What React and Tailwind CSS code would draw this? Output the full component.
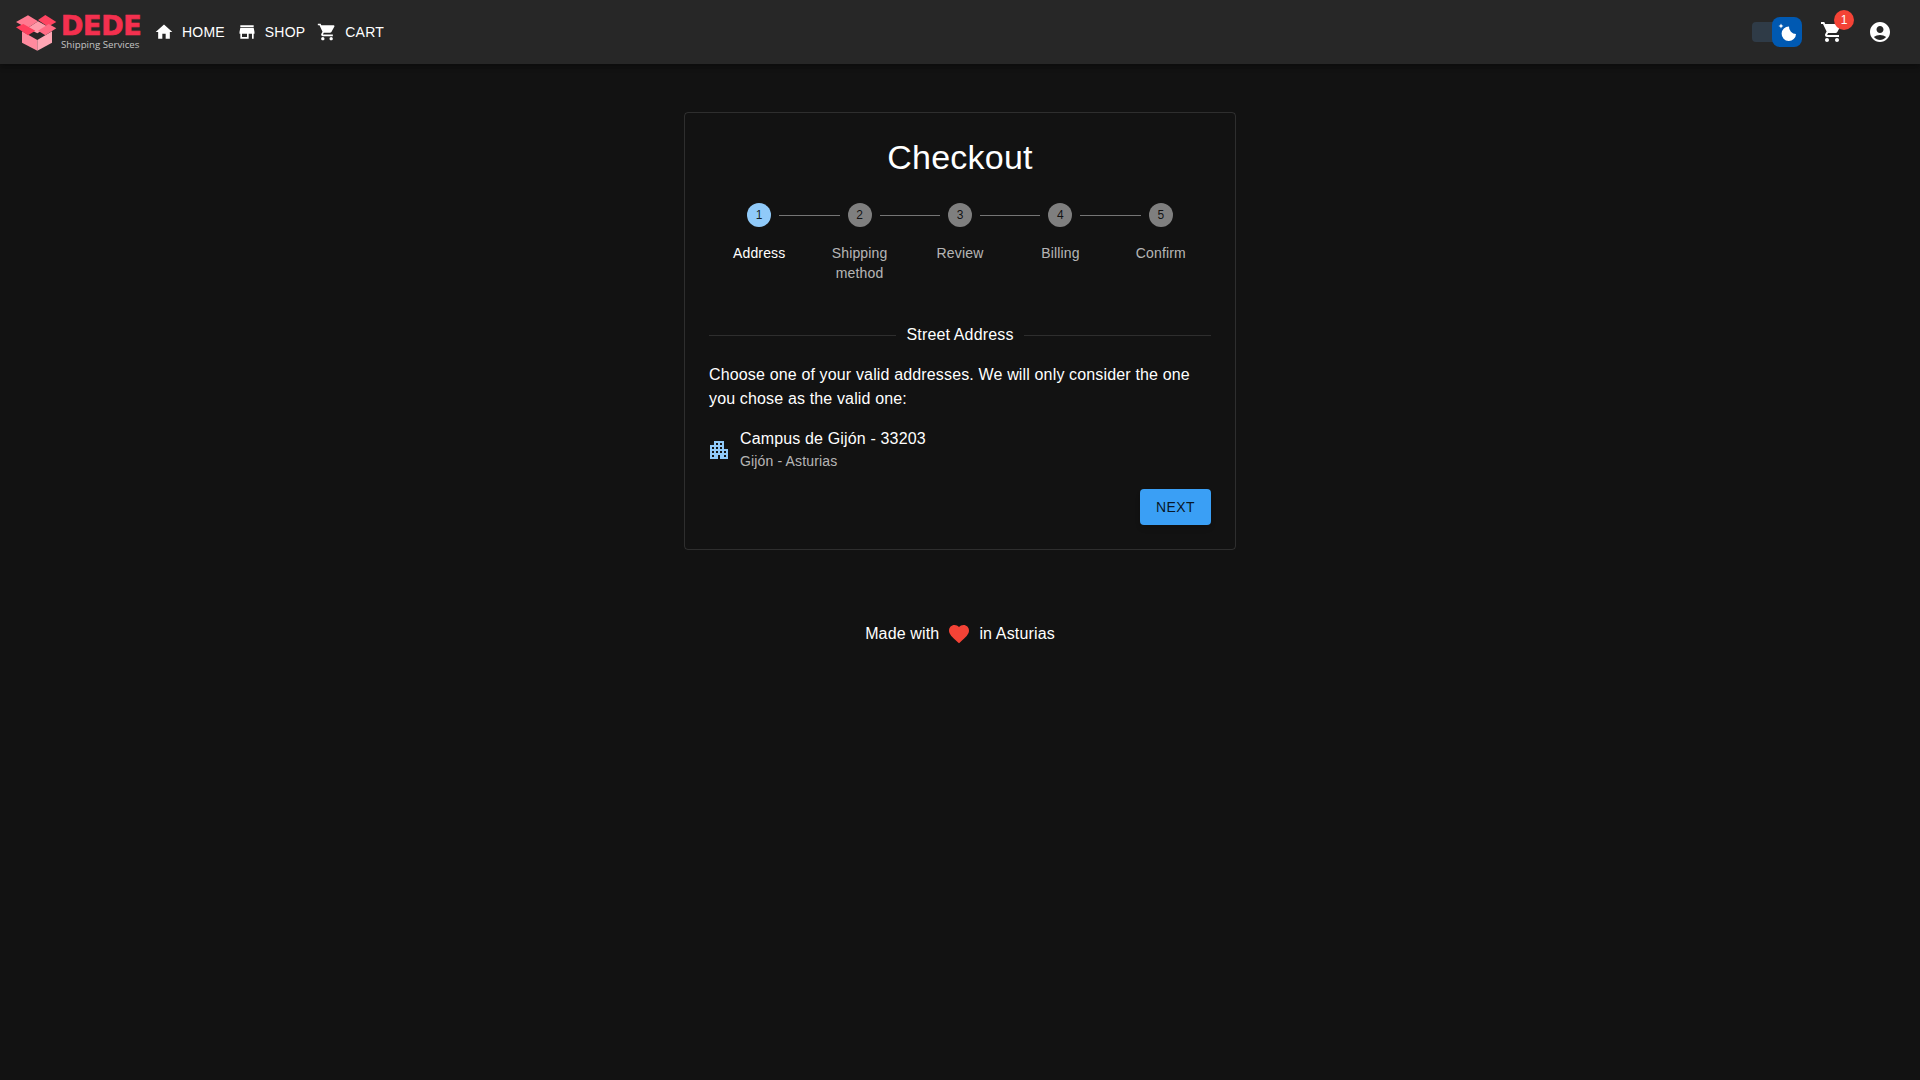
import React from "react";

const ICONS = {
  home: "M10 20v-6h4v6h5v-8h3L12 3 2 12h3v8z",
  store: "M20 4H4v2h16V4zm1 10v-2l-1-5H4l-1 5v2h1v6h10v-6h4v6h2v-6h1zm-9 4H6v-4h6v4z",
  cart: "M7 18c-1.1 0-1.99.9-1.99 2S5.9 22 7 22s2-.9 2-2-.9-2-2-2zM1 2v2h2l3.6 7.59-1.35 2.45c-.16.28-.25.61-.25.96 0 1.1.9 2 2 2h12v-2H7.42c-.14 0-.25-.11-.25-.25l.03-.12.9-1.63h7.45c.75 0 1.41-.41 1.75-1.03l3.58-6.49c.08-.14.12-.31.12-.48 0-.55-.45-1-1-1H5.21l-.94-2H1zm16 16c-1.1 0-1.99.9-1.99 2s.89 2 1.99 2 2-.9 2-2-.9-2-2-2z",
  account: "M12 2C6.48 2 2 6.48 2 12s4.48 10 10 10 10-4.48 10-10S17.52 2 12 2zm0 4c1.93 0 3.5 1.57 3.5 3.5S13.93 13 12 13s-3.5-1.57-3.5-3.5S10.07 6 12 6zm0 14c-2.03 0-4.43-.82-6.14-2.88C7.55 15.8 9.68 15 12 15s4.45.8 6.14 2.12C16.43 19.18 14.03 20 12 20z",
  heart: "M12 21.35l-1.45-1.32C5.4 15.36 2 12.28 2 8.5 2 5.42 4.42 3 7.5 3c1.74 0 3.41.81 4.5 2.09C13.09 3.81 14.76 3 16.5 3 19.58 3 22 5.42 22 8.5c0 3.78-3.4 6.86-8.55 11.54L12 21.35z",
  apartment: "M17 11V3H7v4H3v14h8v-4h2v4h8V11h-4zM7 19H5v-2h2v2zm0-4H5v-2h2v2zm0-4H5V9h2v2zm4 4H9v-2h2v2zm0-4H9V9h2v2zm0-4H9V5h2v2zm4 8h-2v-2h2v2zm0-4h-2V9h2v2zm0-4h-2V5h2v2zm4 12h-2v-2h2v2zm0-4h-2v-2h2v2z",
};

const Icon = ({ name, className }) => (
  <svg viewBox="0 0 24 24" fill="currentColor" className={className}>
    <path d={ICONS[name]} />
  </svg>
);

const Logo = () => (
  <div className="flex items-center">
    <svg viewBox="0 0 150 132" className="w-[50px] h-[44px] shrink-0">
      <polygon points="78,34 46,55 76,70 108,50" fill="#ff9cab" />
      <polygon points="30,64 76,90 76,122 30,98" fill="#ff8a9e" />
      <polygon points="76,90 120,64 120,98 76,122" fill="#ffa6b4" />
      <polygon points="48,16 12,36 46,55 78,34" fill="#ff7a90" />
      <polygon points="100,15 133,36 108,50 78,30" fill="#ff4461" />
      <polygon points="12,52 34,42 70,62 48,76" fill="#ff3f5d" />
      <polygon points="133,55 110,42 78,62 100,76" fill="#ff6b84" />
    </svg>
    <div className="flex flex-col w-[81px] -mt-[1px] -ml-[1px]">
      <span className="font-['DejaVu_Sans',sans-serif] font-bold text-[27px] leading-[25px] tracking-[-0.3px] text-[#f4304f] [-webkit-text-stroke:0.7px_#f4304f] whitespace-nowrap">
        DEDE
      </span>
      <span className="font-['Open_Sans',sans-serif] text-[9.7px] leading-[13px] text-[#c4c4c4] whitespace-nowrap">
        Shipping Services
      </span>
    </div>
  </div>
);

const NavButton = ({ icon, label }) => (
  <div className="flex items-center gap-2 text-sm tracking-[0.2px] text-white">
    <Icon name={icon} className="w-5 h-5" />
    <span>{label}</span>
  </div>
);

const ThemeSwitch = () => (
  <div className="relative w-[50px] h-[30px] flex items-center">
    <div className="w-[32px] h-5 rounded bg-[#2f3b47]"></div>
    <div className="absolute left-5 top-0 w-[30px] h-[30px] rounded-lg bg-[#0059b2] flex items-center justify-center">
      <svg viewBox="0 0 30 30" className="w-[30px] h-[30px]" fill="#fff">
        <path d="M17 9.6A7.2 7.2 0 1 0 24 17 A7 7 0 0 1 17 9.6Z" />
        <path d="M9 6.5 L9.8 8.2 L11.5 9 L9.8 9.8 L9 11.5 L8.2 9.8 L6.5 9 L8.2 8.2Z" />
      </svg>
    </div>
  </div>
);

const Navbar = () => (
  <header className="h-16 bg-[#272727] flex items-center justify-between pl-3 pr-7 shadow-[0_2px_4px_-1px_rgba(0,0,0,0.2),0_4px_5px_0_rgba(0,0,0,0.14)]">
    <div className="flex items-center gap-3">
      <Logo />
      <NavButton icon="home" label="HOME" />
      <NavButton icon="store" label="SHOP" />
      <NavButton icon="cart" label="CART" />
    </div>
    <div className="flex items-center">
      <ThemeSwitch />
      <div className="relative ml-[18px] text-white">
        <Icon name="cart" className="w-6 h-6" />
        <span className="absolute -top-[10px] left-[14px] w-5 h-5 rounded-full bg-[#f44336] text-white text-xs flex items-center justify-center">
          1
        </span>
      </div>
      <Icon name="account" className="w-6 h-6 ml-6 text-white" />
    </div>
  </header>
);

const STEPS = ["Address", "Shipping method", "Review", "Billing", "Confirm"];

const Stepper = () => (
  <div className="flex mt-[26px]">
    {STEPS.map((step, i) => (
      <div key={step} className="flex-1 min-w-0 relative flex flex-col items-center px-2">
        {i > 0 && (
          <div className="absolute top-3 left-[calc(-50%+20px)] right-[calc(50%+20px)] h-px bg-[#757575]"></div>
        )}
        <div
          className={
            "w-6 h-6 rounded-full flex items-center justify-center text-xs text-black/87 " +
            (i === 0 ? "bg-[#90caf9]" : "bg-[#7f7f7f]")
          }
        >
          {i + 1}
        </div>
        <div
          className={
            "mt-4 text-sm leading-5 tracking-[0.15px] text-center " +
            (i === 0 ? "text-white" : "text-white/70")
          }
        >
          {step}
        </div>
      </div>
    ))}
  </div>
);

const App = () => {
  return (
    <div className="min-h-screen bg-[#121212] text-white font-['Liberation_Sans',Arial,sans-serif]">
      <Navbar />
      <main className="flex flex-col items-center pt-12">
        <div className="w-[552px] border border-white/12 rounded px-6 pt-6 pb-6 box-border">
          <h1 className="text-[34px] leading-10 tracking-[0.25px] text-center">Checkout</h1>
          <Stepper />
          <div className="flex items-center mt-10 h-6">
            <div className="flex-1 h-px bg-white/12"></div>
            <span className="px-[10px] text-base tracking-[0.15px]">Street Address</span>
            <div className="flex-1 h-px bg-white/12"></div>
          </div>
          <p className="mt-4 text-base leading-6 tracking-[0.15px]">
            Choose one of your valid addresses. We will only consider the one you chose as the valid one:
          </p>
          <div className="flex items-center mt-4">
            <Icon name="apartment" className="w-6 h-6 text-[#90caf9] -ml-[2px] mr-[9px] mt-[1px]" />
            <div className="flex flex-col">
              <span className="text-base leading-6 tracking-[0.15px]">Campus de Gijón - 33203</span>
              <span className="text-sm leading-5 tracking-[0.15px] text-white/70">Gijón - Asturias</span>
            </div>
          </div>
          <div className="flex justify-end mt-[18px]">
            <button className="w-[71px] h-9 rounded bg-[#3a9ff5] text-sm tracking-[0.4px] text-black/87 shadow-md">
              NEXT
            </button>
          </div>
        </div>
        <footer className="flex items-center gap-2 mt-[72px] text-base tracking-[0.15px]">
          <span>Made with</span>
          <Icon name="heart" className="w-6 h-6 text-[#f44336]" />
          <span>in Asturias</span>
        </footer>
      </main>
    </div>
  );
};

export default App;
